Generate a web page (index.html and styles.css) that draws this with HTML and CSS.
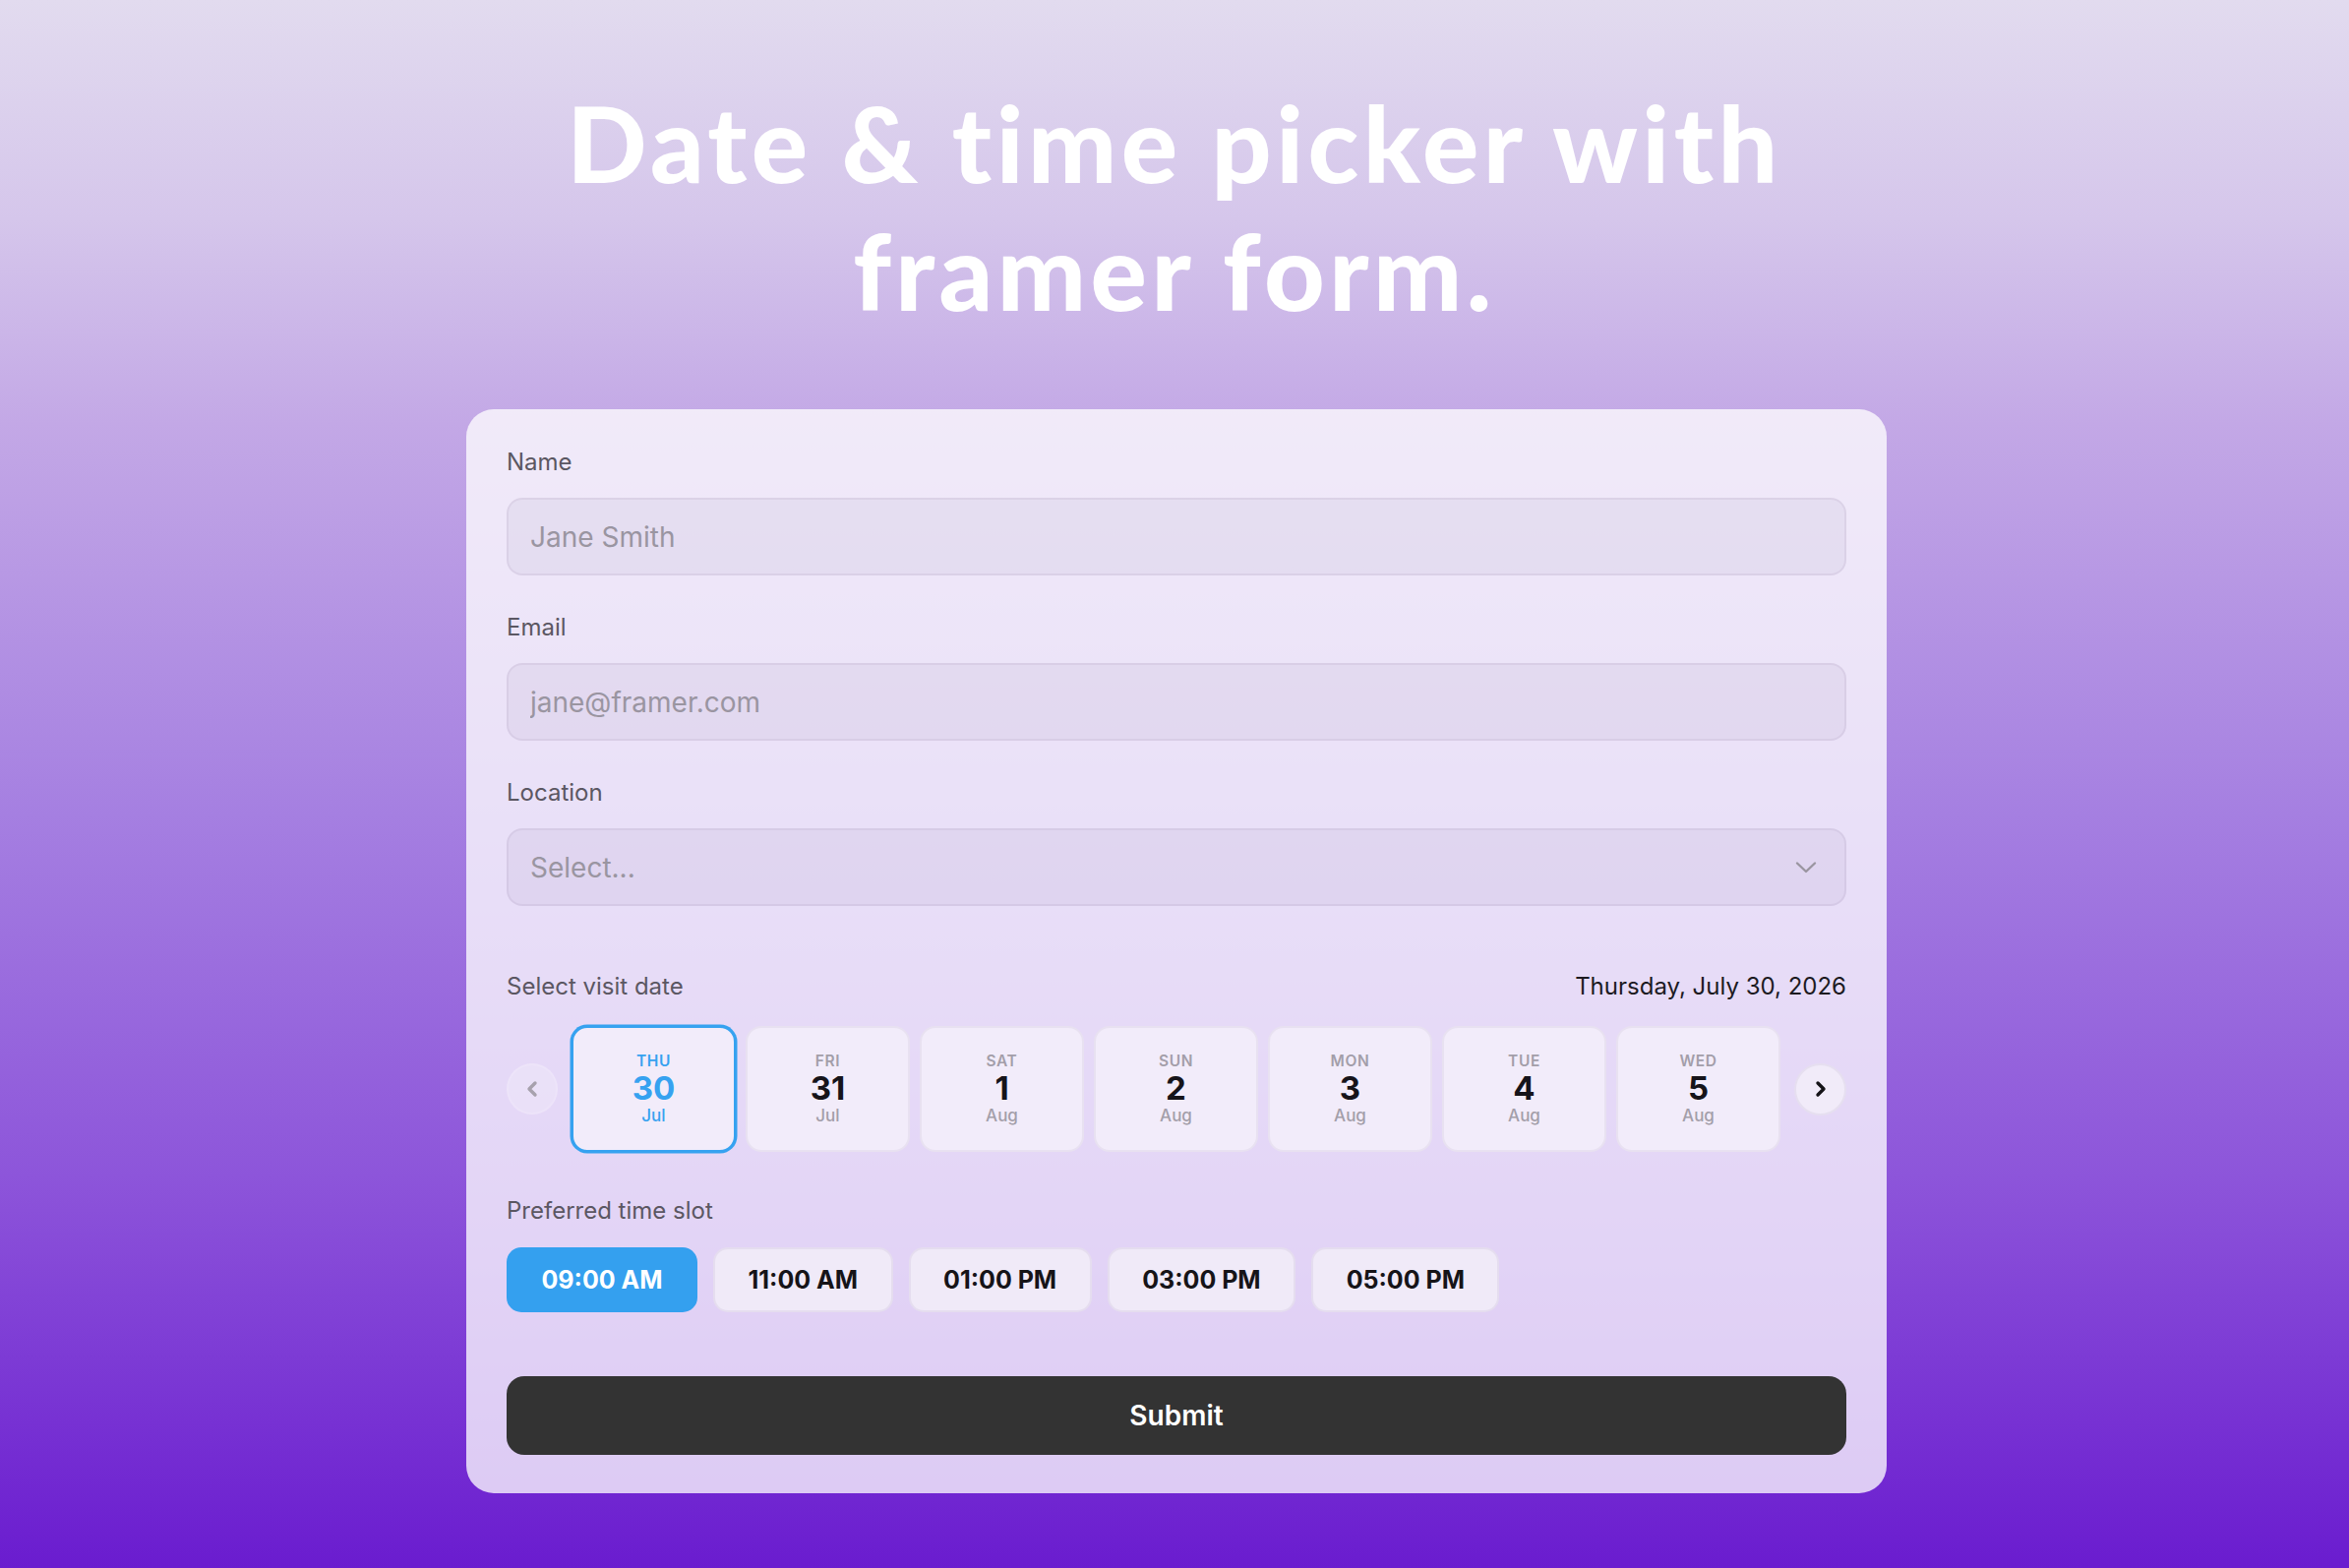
FILE: index.html
```html
<!DOCTYPE html>
<html lang="en">
<head>
<meta charset="utf-8">
<title>Date &amp; time picker with framer form.</title>
<link rel="stylesheet" href="styles.css">
</head>
<body>
<main class="page">
  <h1 class="title">Date &amp; time picker with<br>framer form.</h1>
  <form class="card">
    <div class="field">
      <label class="label" for="name">Name</label>
      <input class="input" id="name" type="text" placeholder="Jane Smith">
    </div>
    <div class="field">
      <label class="label" for="email">Email</label>
      <input class="input" id="email" type="email" placeholder="jane@framer.com">
    </div>
    <div class="field">
      <span class="label">Location</span>
      <div class="input select">
        <span class="placeholder">Select...</span>
        <svg class="chev-down" width="22" height="14" viewBox="0 0 22 14"><path d="M2 2.5 L11 11 L20 2.5" fill="none" stroke="#9a95a0" stroke-width="2.4" stroke-linecap="round" stroke-linejoin="round"/></svg>
      </div>
    </div>

    <div class="date-head">
      <span class="label">Select visit date</span>
      <span class="date-value">Thursday, July 30, 2026</span>
    </div>

    <div class="strip">
      <button type="button" class="nav prev" aria-label="Previous">
        <svg width="14" height="20" viewBox="0 0 14 20"><path d="M10 4 L4 10 L10 16" fill="none" stroke="#a7a1ad" stroke-width="3.4" stroke-linecap="round" stroke-linejoin="round"/></svg>
      </button>
      <div class="days">
        <div class="day sel"><span class="dow">THU</span><span class="num">30</span><span class="mon">Jul</span></div>
        <div class="day"><span class="dow">FRI</span><span class="num">31</span><span class="mon">Jul</span></div>
        <div class="day"><span class="dow">SAT</span><span class="num">1</span><span class="mon">Aug</span></div>
        <div class="day"><span class="dow">SUN</span><span class="num">2</span><span class="mon">Aug</span></div>
        <div class="day"><span class="dow">MON</span><span class="num">3</span><span class="mon">Aug</span></div>
        <div class="day"><span class="dow">TUE</span><span class="num">4</span><span class="mon">Aug</span></div>
        <div class="day"><span class="dow">WED</span><span class="num">5</span><span class="mon">Aug</span></div>
      </div>
      <button type="button" class="nav next" aria-label="Next">
        <svg width="14" height="20" viewBox="0 0 14 20"><path d="M4 4 L10 10 L4 16" fill="none" stroke="#151318" stroke-width="3.4" stroke-linecap="round" stroke-linejoin="round"/></svg>
      </button>
    </div>

    <span class="label slot-label">Preferred time slot</span>
    <div class="slots">
      <button type="button" class="slot sel">09:00 AM</button>
      <button type="button" class="slot">11:00 AM</button>
      <button type="button" class="slot">01:00 PM</button>
      <button type="button" class="slot">03:00 PM</button>
      <button type="button" class="slot">05:00 PM</button>
    </div>

    <button type="submit" class="submit">Submit</button>
  </form>
</main>
</body>
</html>
```

FILE: styles.css
```css
html, body {
  margin: 0;
  padding: 0;
}

body {
  min-height: 1594px;
  background: linear-gradient(180deg, #e2dbef 0%, #d5c6eb 14%, #c3a8e6 27%, #a57fe1 52%, #8d55da 75%, #6a1ccf 100%);
  font-family: Inter, "Noto Sans", sans-serif;
}

.page {
  display: flex;
  flex-direction: column;
  align-items: center;
  padding-top: 80px;
}

.title {
  margin: 0;
  font-family: Lato, "Noto Sans", sans-serif;
  font-weight: 900;
  font-size: 107px;
  line-height: 130px;
  color: #ffffff;
  text-align: center;
  letter-spacing: 4.5px;
}

.card {
  margin-top: 76px;
  margin-left: 4px;
  width: 1444px;
  box-sizing: border-box;
  padding: 40px 41px 39px;
  background: rgba(255, 255, 255, 0.76);
  border-radius: 28px;
  display: flex;
  flex-direction: column;
}

.field {
  display: flex;
  flex-direction: column;
  gap: 22px;
  margin-bottom: 39px;
}

.label {
  font-family: Inter, "Noto Sans", sans-serif;
  font-weight: 400;
  font-size: 24px;
  line-height: 28px;
  color: #5b5762;
}

.input {
  height: 79px;
  box-sizing: border-box;
  border: 2px solid rgba(60, 30, 90, 0.06);
  background: rgba(60, 30, 90, 0.05);
  border-radius: 16px;
  padding: 0 22px;
  font-family: Inter, "Noto Sans", sans-serif;
  font-size: 28px;
  color: #222;
  outline: none;
}

.input::placeholder,
.placeholder {
  color: #9a95a1;
  font-size: 28px;
}

.select {
  display: flex;
  align-items: center;
  justify-content: space-between;
  padding-right: 28px;
}

.date-head {
  margin-top: 29px;
  display: flex;
  justify-content: space-between;
  align-items: baseline;
}

.date-value {
  font-size: 24px;
  line-height: 28px;
  color: #1c1a1f;
}

.strip {
  margin-top: 26px;
  display: flex;
  align-items: center;
  gap: 14px;
  height: 128px;
}

.nav {
  flex: none;
  width: 52px;
  height: 52px;
  border-radius: 50%;
  padding: 0;
  display: flex;
  align-items: center;
  justify-content: center;
  cursor: pointer;
}

.nav.prev {
  background: rgba(255, 255, 255, 0.22);
  border: 2px solid rgba(255, 255, 255, 0.1);
}

.nav.next {
  width: 53px;
  height: 53px;
  background: #f1ebf9;
  border: 2px solid #e6dff0;
}

.days {
  flex: 1;
  display: flex;
  gap: 10px;
  height: 128px;
}

.day {
  flex: 1;
  box-sizing: border-box;
  border: 2px solid #e8e1f1;
  background: #f2ecfa;
  border-radius: 16px;
  display: flex;
  flex-direction: column;
  align-items: center;
  justify-content: center;
}

.day.sel {
  border-color: #36a2f0;
  box-shadow: 0 0 0 1.5px #36a2f0;
}

.dow {
  font-weight: 600;
  font-size: 15.5px;
  line-height: 18px;
  letter-spacing: 0.04em;
  color: #a39ea9;
}

.num {
  font-weight: 700;
  font-size: 33px;
  line-height: 36px;
  color: #16141a;
}

.mon {
  font-weight: 500;
  font-size: 17px;
  line-height: 20px;
  color: #a39ea9;
}

.day.sel .dow,
.day.sel .num,
.day.sel .mon {
  color: #36a2f0;
}

.slot-label {
  margin-top: 46px;
}

.slots {
  margin-top: 23px;
  display: flex;
  gap: 16px;
}

.slot {
  height: 66px;
  box-sizing: border-box;
  padding: 0 33.5px;
  border: 2px solid #e5ddef;
  background: #f0eaf8;
  border-radius: 15px;
  font-family: Inter, "Noto Sans", sans-serif;
  font-weight: 700;
  font-size: 25px;
  color: #161418;
  cursor: pointer;
}

.slot.sel {
  background: #34a0ef;
  border-color: #34a0ef;
  color: #ffffff;
}

.submit {
  margin-top: 65px;
  height: 80px;
  border: none;
  border-radius: 18px;
  background: #333333;
  color: #ffffff;
  font-family: Inter, "Noto Sans", sans-serif;
  font-weight: 600;
  font-size: 28px;
  cursor: pointer;
}
```
